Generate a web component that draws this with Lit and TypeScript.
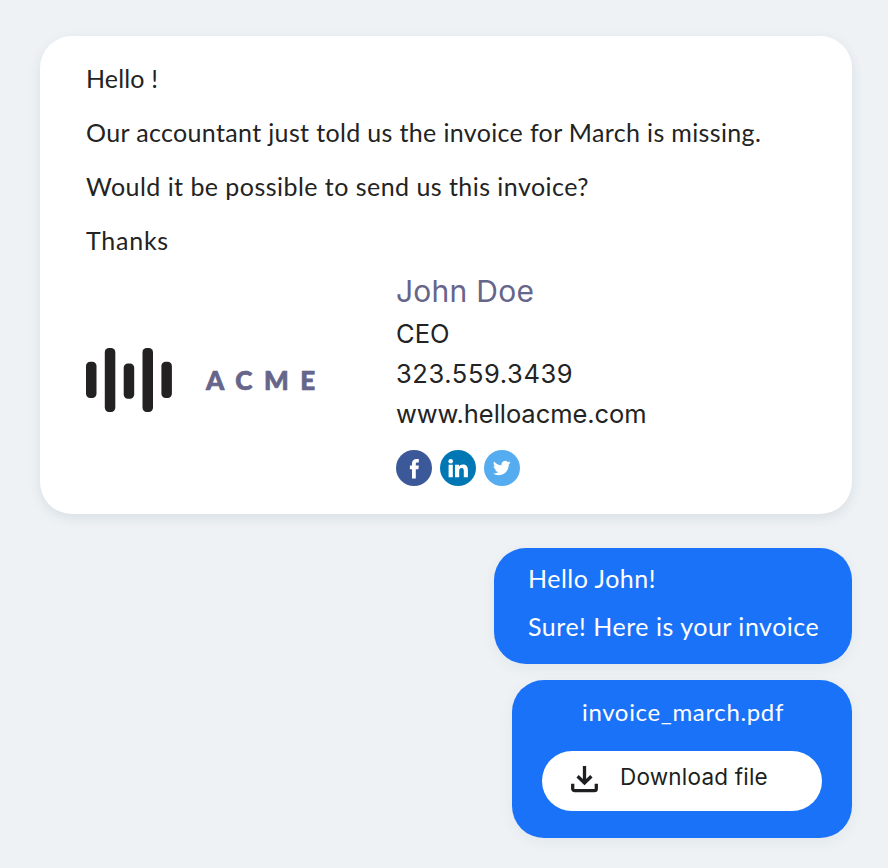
import { LitElement, html, css, svg } from "lit";
import { customElement } from "lit/decorators.js";

const bars = [
  { x: 0, y: 13.7, h: 36.3 },
  { x: 18.8, y: 0, h: 64 },
  { x: 37.7, y: 15.5, h: 35.3 },
  { x: 56.5, y: 0, h: 64 },
  { x: 75.4, y: 13.7, h: 36.3 },
];

@customElement("app-root")
export class AppRoot extends LitElement {
  static styles = css`
    :host {
      display: flex;
      flex-direction: column;
      align-items: flex-end;
      box-sizing: border-box;
      width: 888px;
      height: 868px;
      padding: 36px 36px 30px 40px;
      overflow: hidden;
      background: #eef2f5;
      color: #232323;
      font-family: Lato, sans-serif;
      font-size: 25px;
    }
    p { margin: 0; white-space: nowrap; }
    .bubble {
      box-sizing: border-box;
      border-radius: 32px;
      box-shadow: 0 4px 14px rgba(30, 60, 90, 0.06);
    }
    .received {
      width: 812px;
      height: 478px;
      padding: 16px 46px 0;
      background: #fff;
      box-shadow: 0 4px 12px rgba(30, 60, 90, 0.1);
    }
    .received > p { height: 54px; line-height: 52px; }
    .l1 { letter-spacing: 0.15px; }
    .l2 { letter-spacing: 0.35px; }
    .l3 { letter-spacing: 0.46px; }
    .l4 { letter-spacing: 0.75px; }
    .signature {
      display: grid;
      grid-template-columns: 310px 1fr;
      font-family: Inter, sans-serif;
      font-size: 25.5px;
    }
    .brand { display: flex; align-items: center; height: 64px; margin-top: 80px; }
    .brand-name {
      margin-left: 34px;
      color: #66658a;
      font-family: Lato, sans-serif;
      font-weight: 900;
      font-size: 26px;
      letter-spacing: 11.6px;
      line-height: 64px;
      -webkit-text-stroke: 0.7px #66658a;
    }
    .contact { padding-top: 2px; }
    .contact p { height: 40px; line-height: 40px; }
    .contact .name { height: 44px; line-height: 42px; color: #66658a; font-size: 30px; letter-spacing: 0.25px; }
    .title { letter-spacing: 0; }
    .phone { letter-spacing: 0.6px; }
    .site { letter-spacing: -0.06px; }
    .socials { display: flex; gap: 8px; margin-top: 16px; }
    .socials svg, .brand svg, .download svg { display: block; }
    .sent { background: #1a72f8; color: #fff; }
    .reply { width: 358px; height: 116px; margin-top: 34px; padding: 6px 34px 0; }
    .reply p { height: 48px; line-height: 48px; }
    .r1 { letter-spacing: 0.5px; }
    .r2 { letter-spacing: 0.52px; }
    .file {
      display: flex;
      flex-direction: column;
      align-items: center;
      width: 340px;
      height: 158px;
      margin-top: 16px;
      padding: 16px 30px 0;
    }
    .filename { height: 55px; line-height: 31px; font-size: 24px; letter-spacing: 0.65px; padding-left: 2px; }
    .download {
      display: flex;
      align-items: center;
      box-sizing: border-box;
      width: 280px;
      height: 60px;
      padding: 0 0 0 29px;
      border: 0;
      border-radius: 30px;
      background: #fff;
      color: #1d1f20;
      font-family: Inter, sans-serif;
      font-size: 22.5px;
      letter-spacing: 0.2px;
      white-space: nowrap;
    }
    .download svg { margin-bottom: 4px; }
    .download span { margin-left: 22px; padding-bottom: 9px; }
  `;

  render() {
    return html`
      <section class="bubble received">
        <p class="l1">Hello !</p>
        <p class="l2">Our accountant just told us the invoice for March is missing.</p>
        <p class="l3">Would it be possible to send us this invoice?</p>
        <p class="l4">Thanks</p>
        <div class="signature">
          <div class="brand">
            <svg width="86" height="64" viewBox="0 0 86 64" fill="#232122">
              ${bars.map((b) => svg`<rect x=${b.x} y=${b.y} width="10.5" height=${b.h} rx="4.2" />`)}
            </svg>
            <span class="brand-name">ACME</span>
          </div>
          <div class="contact">
            <p class="name">John Doe</p>
            <p class="title">CEO</p>
            <p class="phone">323.559.3439</p>
            <p class="site">www.helloacme.com</p>
            <div class="socials">
              <svg width="36" height="36" viewBox="0 0 36 36">
                <circle cx="18" cy="18" r="18" fill="#3b5998" />
                <path fill="#fff" d="M16 28.4v-9.1h-2.1v-3.7h2.1v-2.1c0-3.1 1.8-4.6 4.5-4.6.9 0 1.8.05 2.3.15v3.4h-1.5c-1.3 0-1.5.6-1.5 1.5v1.65h3l-.4 3.7h-2.6v9.1z" />
              </svg>
              <svg width="36" height="36" viewBox="0 0 36 36">
                <circle cx="18" cy="18" r="18" fill="#0077b5" />
                <g fill="#fff">
                  <circle cx="10.7" cy="11.2" r="2.3" />
                  <path d="M8.6 14.7h4.2V27.2H8.6zM15 14.7h4v1.7c.6-1.1 2-2 3.9-2 4 0 5 2.4 5 5.9v6.9h-4.1v-6.1c0-1.6-.1-3.1-2.2-3.1s-2.4 1.5-2.4 3v6.2H15z" />
                </g>
              </svg>
              <svg width="36" height="36" viewBox="0 0 36 36">
                <circle cx="18" cy="18" r="18" fill="#55acee" />
                <path transform="translate(8.9 9.2) scale(.735)" fill="#fff" d="M23.953 4.57a10 10 0 01-2.825.775 4.958 4.958 0 002.163-2.723c-.951.555-2.005.959-3.127 1.184a4.92 4.92 0 00-8.384 4.482C7.69 8.095 4.067 6.13 1.64 3.162a4.822 4.822 0 00-.666 2.475c0 1.71.87 3.213 2.188 4.096a4.904 4.904 0 01-2.228-.616v.06a4.923 4.923 0 003.946 4.827 4.996 4.996 0 01-2.212.085 4.936 4.936 0 004.604 3.417 9.867 9.867 0 01-6.102 2.105c-.39 0-.779-.023-1.17-.067a13.995 13.995 0 007.557 2.209c9.053 0 13.998-7.496 13.998-13.985 0-.21 0-.42-.015-.63A9.935 9.935 0 0024 4.59z" />
              </svg>
            </div>
          </div>
        </div>
      </section>
      <section class="bubble sent reply">
        <p class="r1">Hello John!</p>
        <p class="r2">Sure! Here is your invoice</p>
      </section>
      <section class="bubble sent file">
        <p class="filename">invoice_march.pdf</p>
        <button class="download">
          <svg width="27" height="28" viewBox="0 0 27 28" fill="none" stroke="#1d1f20" stroke-width="3.3">
            <path d="M13.5 1v17M6.6 11.2l6.9 6.8 6.9-6.8M1.7 18.8v4.9a1.9 1.9 0 0 0 1.9 1.9h19.8a1.9 1.9 0 0 0 1.9-1.9v-4.9" />
          </svg>
          <span>Download file</span>
        </button>
      </section>
    `;
  }
}
